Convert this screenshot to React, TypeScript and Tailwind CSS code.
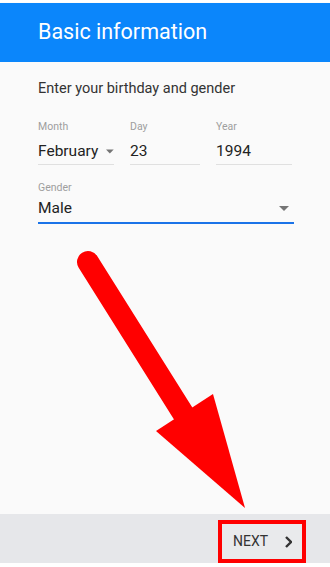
import React from 'react';

const Caret = () => (
  <svg width="10" height="5" viewBox="0 0 10 5" className="fill-[#757575]">
    <path d="M0 0h10L5 5z" />
  </svg>
);

const Field = ({ label, value, caret, width }: { label: string; value: string; caret?: boolean; width: string }) => (
  <div className={`flex flex-col ${width}`}>
    <span className="text-[10.5px] leading-[14px] text-[#9e9e9e]">{label}</span>
    <div className="mt-[9px] flex h-[22px] items-center gap-[8px] border-b border-[#e0e0e0] pb-[4px]">
      <span className="text-[15.5px] text-[#222]">{value}</span>
      {caret && <Caret />}
    </div>
  </div>
);

export default function App() {
  return (
    <div className="relative flex h-[567px] w-[330px] flex-col bg-white font-['Roboto',sans-serif]">
      <div className="mt-[3px] flex h-[59px] items-center bg-[#0b86fb] pl-[38px] shadow-[0_1px_2px_rgba(0,0,0,0.2)]">
        <h1 className="text-[21.5px] font-normal text-white">Basic information</h1>
      </div>

      <div className="flex flex-1 flex-col bg-[#fafafa] px-[38px] pt-[16px]">
        <p className="text-[14.5px] text-[#333]">Enter your birthday and gender</p>

        <div className="mt-[20px] flex gap-[16px]">
          <Field label="Month" value="February" caret width="w-[76px]" />
          <Field label="Day" value="23" width="w-[71px]" />
          <Field label="Year" value="1994" width="w-[77px]" />
        </div>

        <div className="mt-[16px] flex w-[256px] flex-col">
          <span className="text-[10.5px] leading-[14px] text-[#9e9e9e]">Gender</span>
          <div className="mt-[2px] flex items-center justify-between border-b-2 border-[#1a73e8] pb-[2px] pr-[5px]">
            <span className="text-[15.5px] text-[#222]">Male</span>
            <Caret />
          </div>
        </div>
      </div>

      <div className="flex h-[49px] items-center justify-end bg-[#e6e7ea] pr-[24px]">
        <button className="mt-[6px] flex h-[43px] w-[88px] items-center justify-between border-[4px] border-[#ff0000] bg-[#e9eaec] pl-[11px] pr-[10px]">
          <span className="text-[14px] font-normal text-[#333]">NEXT</span>
          <svg width="8" height="12" viewBox="0 0 8 12" fill="none" stroke="#333" strokeWidth="2.4">
            <path d="M2 1l5 5-5 5" />
          </svg>
        </button>
      </div>
      <div className="h-[4px] bg-white" />

      <svg className="pointer-events-none absolute left-0 top-0" width="330" height="567" viewBox="0 0 330 567">
        <line x1="88" y1="262" x2="186" y2="418" stroke="#ff0000" strokeWidth="22" strokeLinecap="round" />
        <polygon points="156,431 213,394 245,508" fill="#ff0000" />
      </svg>
    </div>
  );
}
